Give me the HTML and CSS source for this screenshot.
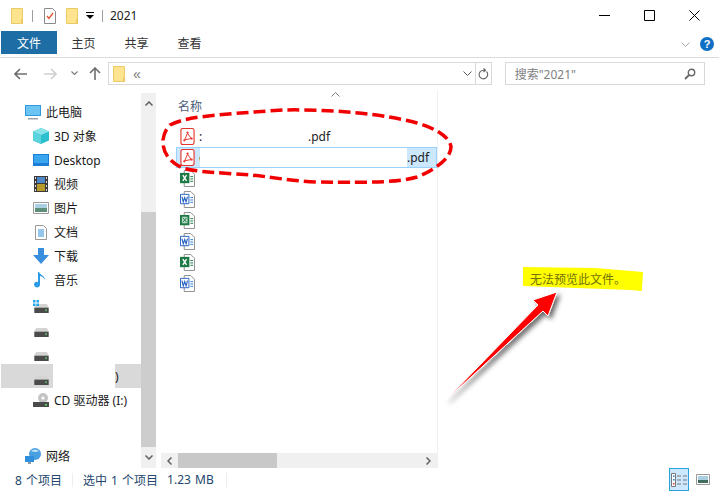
FILE: index.html
```html
<!DOCTYPE html>
<html lang="zh-CN">
<head>
    <meta charset="UTF-8">
    <title>2021</title>
    <link rel="stylesheet" href="styles.css">
</head>
<body>
    <svg class="defs" width="0" height="0">
        <symbol id="folder" viewBox="0 0 12 16">
            <path d="M.5.5h11v15H.5z" fill="#ffe48f" stroke="#eccb66"/>
            <path d="M10 11h2v5h-2z" fill="#eccb66"/>
        </symbol>
        <symbol id="pdf" viewBox="0 0 16 18">
            <path d="M1 2.500q0-2 2-2h10q2 0 2 2v13q0 2-2 2H3q-2 0-2-2z" fill="#fff" stroke="#e5352b" stroke-width="1.200"/>
            <path d="M8 5.500L5 12.500 12 11.200Z" fill="none" stroke="#e5352b"/>
            <circle cx="8" cy="4.800" r="1.200" fill="#e5352b"/>
            <circle cx="4.600" cy="13" r="1.200" fill="#e5352b"/>
            <circle cx="12.400" cy="11.200" r="1.200" fill="#e5352b"/>
        </symbol>
        <symbol id="xls" viewBox="0 0 16 18">
            <path d="M4.500.5h7l4 4v13h-11z" fill="#fff" stroke="#8a8a8a"/>
            <path d="M0 3h10v11H0z" fill="#1d7a45"/>
            <path d="M3 5.500l4 6M7 5.500l-4 6" stroke="#fff" stroke-width="1.500"/>
            <path d="M11 7h3M11 9.500h3M11 12h3" stroke="#1d7a45"/>
        </symbol>
        <symbol id="xlsm" viewBox="0 0 16 18">
            <path d="M4.500.5h7l4 4v13h-11z" fill="#fff" stroke="#8a8a8a"/>
            <path d="M1 4h8v9H1z" fill="#bcdcc8" stroke="#1d7a45" stroke-width="2"/>
            <path d="M3 6l4 5M7 6l-4 5" stroke="#1d7a45"/>
            <path d="M11 7h3M11 9.500h3M11 12h3" stroke="#1d7a45"/>
        </symbol>
        <symbol id="doc" viewBox="0 0 16 18">
            <path d="M4.500.5h7l4 4v13h-11z" fill="#fff" stroke="#8a8a8a"/>
            <path d="M.5 3.500h9v10h-9z" fill="#fff" stroke="#1f5fc0"/>
            <path d="M2 6l1.500 5.500L5 7l1.500 4.500L8 6" fill="none" stroke="#1f5fc0" stroke-width="1.200"/>
            <path d="M11 7h3M11 9.500h3M11 12h3" stroke="#2b7cd3"/>
        </symbol>
        <symbol id="drive" viewBox="0 0 16 10">
            <path d="M2 0h12l2 4H0z" fill="#d4d4d4"/>
            <path d="M0 4h16v6H0z" fill="#4b4b4b"/>
            <path d="M12 6h2v1.500h-2z" fill="#5fe05f"/>
        </symbol>
    </svg>

    <div class="window">
        <header class="titlebar">
            <svg class="ic-folder"><use href="#folder"/></svg>
            <span class="qa-sep"></span>
            <svg class="qa-doc" width="12" height="16" viewBox="0 0 12 16">
                <path d="M.5.500h8l3 3v12H.500z" fill="#fff" stroke="#8a8a8a"/>
                <path d="M3 8l2 2.500L9 5" fill="none" stroke="#e0532b" stroke-width="1.300"/>
            </svg>
            <svg class="ic-folder"><use href="#folder"/></svg>
            <svg class="qa-more" width="8" height="8" viewBox="0 0 8 8">
                <path d="M0 0h8v1H0zM0 3h8L4 7z"/>
            </svg>
            <span class="qa-sep qa-sep-last"></span>
            <span class="title">2021</span>
            <div class="winbtns">
                <svg width="11" height="11" viewBox="0 0 11 11"><path d="M0 5.500h11" stroke="#000"/></svg>
                <svg width="11" height="11" viewBox="0 0 11 11"><path d="M.5.500h10v10H.5z" fill="none" stroke="#000"/></svg>
                <svg width="11" height="11" viewBox="0 0 11 11"><path d="M.5.500l10 10M10.500.500l-10 10" stroke="#000"/></svg>
            </div>
        </header>

        <nav class="ribbon">
            <span class="tab tab-file">文件</span>
            <span class="tab">主页</span>
            <span class="tab">共享</span>
            <span class="tab">查看</span>
            <svg class="ribbon-chev" width="9" height="6" viewBox="0 0 9 6"><path d="M.5.500l4 4 4-4" fill="none" stroke="#a8a8a8"/></svg>
            <span class="help">?</span>
        </nav>

        <div class="navbar">
            <svg class="nav-back" width="13" height="12" viewBox="0 0 13 12"><path d="M6 1L1 6l5 5M1 6h12" fill="none" stroke="#6e6e6e" stroke-width="1.600"/></svg>
            <svg class="nav-fwd" width="13" height="12" viewBox="0 0 13 12"><path d="M7 1l5 5-5 5M12 6H0" fill="none" stroke="#d0d0d0" stroke-width="1.600"/></svg>
            <svg class="nav-drop" width="7" height="5" viewBox="0 0 7 5"><path d="M.5.500l3 3 3-3" fill="none" stroke="#7a7a7a" stroke-width="1.200"/></svg>
            <svg class="nav-up" width="12" height="13" viewBox="0 0 12 13"><path d="M1 6l5-5 5 5M6 1v12" fill="none" stroke="#6e6e6e" stroke-width="1.600"/></svg>
            <div class="address">
                <svg class="ic-folder"><use href="#folder"/></svg>
                <span class="crumb">«</span>
                <svg class="addr-chev" width="9" height="6" viewBox="0 0 9 6"><path d="M.5.500l4 4 4-4" fill="none" stroke="#555"/></svg>
            </div>
            <div class="refresh">
                <svg width="11" height="12" viewBox="0 0 11 12"><path d="M8.500 3.500a4.300 4.300 0 1 1-3-1.300H7M5.500.500L7.500 2.200 5.500 4" fill="none" stroke="#666" stroke-width="1.100"/></svg>
            </div>
            <div class="search">
                <span>搜索"2021"</span>
                <svg width="12" height="12" viewBox="0 0 12 12"><circle cx="7.500" cy="4.500" r="3.200" fill="none" stroke="#666" stroke-width="1.400"/><path d="M5 7l-4 4" stroke="#666" stroke-width="1.800"/></svg>
            </div>
        </div>

        <main class="content">
            <aside class="sidebar">
                <ul class="tree">
                    <li class="node top">
                        <svg width="16" height="15" viewBox="0 0 16 15"><path d="M0 0h16v11H0z" fill="#2f9ae0"/><path d="M1 1h14v9H1z" fill="#6cc4f2"/><path d="M3 13h10v1.500H3z" fill="#9aa4ad"/></svg>
                        此电脑
                    </li>
                    <li class="node">
                        <svg width="16" height="16" viewBox="0 0 16 16"><path d="M8 0l8 3.500v9L8 16l-8-3.500v-9z" fill="#2cc0cf"/><path d="M8 0l8 3.500L8 7 0 3.500z" fill="#8be3ea"/><path d="M8 7v9l-8-3.500v-9z" fill="#5ad3dd"/></svg>
                        3D 对象
                    </li>
                    <li class="node">
                        <svg width="16" height="12" viewBox="0 0 16 12"><path d="M0 0h16v12H0z" fill="#1a7fd4"/><path d="M1 1h14v8H1z" fill="#3aa6ee"/></svg>
                        Desktop
                    </li>
                    <li class="node">
                        <svg width="16" height="16" viewBox="0 0 14 16"><path d="M0 0h14v16H0z" fill="#3a3a3a"/><path d="M3 1h8v6H3z" fill="#4f86c6"/><path d="M3 8h8v7H3z" fill="#b89a2c"/><path d="M1 1h1v2H1zM1 5h1v2H1zM1 9h1v2H1zM1 13h1v2H1zM12 1h1v2h-1zM12 5h1v2h-1zM12 9h1v2h-1zM12 13h1v2h-1z" fill="#ddd"/></svg>
                        视频
                    </li>
                    <li class="node">
                        <svg width="16" height="12" viewBox="0 0 16 12"><path d="M.5.500h15v11H.5z" fill="#fff" stroke="#9a9a9a"/><path d="M2 2h12v4H2z" fill="#a9cfe0"/><path d="M2 6h12v4H2z" fill="#5f8f7a"/></svg>
                        图片
                    </li>
                    <li class="node">
                        <svg width="16" height="15" viewBox="0 0 12 15"><path d="M.5.500h8l3 3v11H.5z" fill="#fff" stroke="#9a9a9a"/><path d="M3 5h6M3 7h6M3 9h6M3 11h6" stroke="#2b8fd8"/></svg>
                        文档
                    </li>
                    <li class="node">
                        <svg width="16" height="16" viewBox="0 0 16 16"><path d="M5 0h6v7h5l-8 9-8-9h5z" fill="#3a8ede"/></svg>
                        下载
                    </li>
                    <li class="node">
                        <svg width="16" height="16" viewBox="0 0 12 16"><path d="M5 1v11.500a3 2.800 0 1 1-2-2.500V0h1c1 3 6 3.500 6 8-1-2.500-3-3.500-5-4z" fill="#2b9be8"/></svg>
                        音乐
                    </li>
                    <li class="node drive">
                        <svg class="drive-win" width="6" height="6" viewBox="0 0 6 6"><path d="M0 0h2.500v2.500H0zM3.500 0H6v2.500H3.500zM0 3.500h2.500V6H0zM3.500 3.500H6V6H3.500z" fill="#1ea7ee"/></svg>
                        <svg class="ic-drive"><use href="#drive"/></svg>
                    </li>
                    <li class="node drive"><svg class="ic-drive"><use href="#drive"/></svg></li>
                    <li class="node drive"><svg class="ic-drive"><use href="#drive"/></svg></li>
                    <li class="node drive selected">
                        <svg class="ic-drive"><use href="#drive"/></svg>
                        <span class="blank-name"></span>)
                    </li>
                    <li class="node">
                        <svg width="16" height="14" viewBox="0 0 16 14"><circle cx="10" cy="5" r="5" fill="#c4c4c4"/><circle cx="10" cy="5" r="1.600" fill="#fff"/><path d="M0 9h16v5H0z" fill="#4b4b4b"/><path d="M12 11h2v1.500h-2z" fill="#5fe05f"/></svg>
                        CD 驱动器 (I:)
                    </li>
                    <li class="node top network">
                        <svg width="16" height="16" viewBox="0 0 16 16"><circle cx="10" cy="6" r="6" fill="#4a9fe0"/><path d="M6 3q4-3 8 0-4 2-8 0z" fill="#bfe3f7"/><path d="M0 8h9v6H0z" fill="#2f8fdc"/><path d="M3 14h3v2H3z" fill="#8a9aa6"/></svg>
                        网络
                    </li>
                </ul>
                <div class="vscroll">
                    <span class="sb-btn"><svg width="8" height="5" viewBox="0 0 8 5"><path d="M.5 4.500L4 1l3.500 3.500" fill="none" stroke="#606060" stroke-width="1.500"/></svg></span>
                    <span class="vscroll-track"></span>
                    <span class="vscroll-thumb"></span>
                    <span class="sb-btn"><svg width="8" height="5" viewBox="0 0 8 5"><path d="M.5.500L4 4l3.500-3.500" fill="none" stroke="#606060" stroke-width="1.500"/></svg></span>
                </div>
            </aside>

            <section class="files">
                <div class="sort-caret"><svg width="9" height="5" viewBox="0 0 9 5"><path d="M.5 4.500l4-4 4 4" fill="none" stroke="#808080"/></svg></div>
                <div class="col-name">名称</div>
                <ul class="file-list">
                    <li class="file">
                        <svg width="15" height="17"><use href="#pdf"/></svg>
                        <span class="lead">:</span><span class="gap-first"></span>.pdf
                    </li>
                    <li class="file current">
                        <svg width="15" height="17"><use href="#pdf"/></svg>
                        <span class="lead">c</span><span class="gap-edit"></span>.pdf
                    </li>
                    <li class="file"><svg width="15" height="17"><use href="#xls"/></svg></li>
                    <li class="file"><svg width="15" height="17"><use href="#doc"/></svg></li>
                    <li class="file"><svg width="15" height="17"><use href="#xlsm"/></svg></li>
                    <li class="file"><svg width="15" height="17"><use href="#doc"/></svg></li>
                    <li class="file"><svg width="15" height="17"><use href="#xls"/></svg></li>
                    <li class="file"><svg width="15" height="17"><use href="#doc"/></svg></li>
                </ul>
                <div class="hscroll">
                    <span class="sb-btn-h"><svg width="5" height="8" viewBox="0 0 5 8"><path d="M4.500.5L1 4l3.500 3.500" fill="none" stroke="#606060" stroke-width="1.500"/></svg></span>
                    <span class="hscroll-thumb"></span>
                    <span class="hscroll-track"></span>
                    <span class="sb-btn-h"><svg width="5" height="8" viewBox="0 0 5 8"><path d="M.5.500L4 4 .5 7.500" fill="none" stroke="#606060" stroke-width="1.500"/></svg></span>
                </div>
            </section>

            <section class="preview">
                <span class="preview-msg">无法预览此文件。</span>
            </section>
        </main>

        <footer class="status">
            <span class="st-count">8 个项目</span>
            <span class="st-sep"></span>
            <span class="st-sel">选中 1 个项目</span>
            <span class="st-size">1.23 MB</span>
            <span class="st-sep st-sep-2"></span>
            <span class="view-btn view-on">
                <svg width="16" height="14" viewBox="0 0 16 14"><path d="M.5.500h4v13h-4z" fill="#fff" stroke="#777"/><path d="M2 2.500h1.500V4H2zM2 6h1.500v1.500H2z" fill="#3a7fc4"/><path d="M2 10h1.500v1.500H2z" fill="#e0352b"/><path d="M6 3h4M12 3h4M6 7h4M12 7h4M6 11h4M12 11h4" stroke="#777"/></svg>
            </span>
            <span class="view-btn">
                <svg width="14" height="11" viewBox="0 0 14 11"><path d="M.5.500h13v10H.5z" fill="#fff" stroke="#999"/><path d="M2 2h10v4H2z" fill="#a9cfe0"/><path d="M2 6h10v3H2z" fill="#3f6f5c"/></svg>
            </span>
        </footer>

        <!-- annotations drawn over the screenshot -->
        <svg class="marks" width="719" height="493" viewBox="0 0 719 493">
            <defs>
                <filter id="arrow-shadow" x="-20%" y="-20%" width="150%" height="150%">
                    <feDropShadow dx="3" dy="3" stdDeviation="2.500" flood-color="#000" flood-opacity=".6"/>
                </filter>
            </defs>
            <path d="M170 125C185 117 210 115 283 110C330 109 385 114 417 123C435 128 450 137 451 147C451 158 435 170 417 177C400 182 375 183 317 182C290 181 265 176 250 175C225 173 195 172 183 168C170 163 162 152 163 140C164 133 166 129 170 125Z" fill="none" stroke="#f00000" stroke-width="3.500" stroke-dasharray="12 5"/>
            <path class="arrow" d="M446 400L538 305 533 300 557 292 548 316 543 311Z" fill="#f00" stroke="#fff" stroke-width="1" filter="url(#arrow-shadow)"/>
        </svg>
    </div>
</body>
</html>
```
FILE: styles.css
```css
* {
    box-sizing: border-box;
}
html, body {
    margin: 0;
    padding: 0;
}
body {
    font-family: "Noto Sans", "Noto Sans CJK SC", sans-serif;
    font-size: 12px;
    color: #1a1a1a;
    background: #fff;
}
ul {
    list-style: none;
    margin: 0;
    padding: 0;
}
svg {
    display: block;
    flex: none;
}
.defs {
    position: absolute;
}
.window {
    position: relative;
    width: 719px;
    height: 493px;
    overflow: hidden;
    display: flex;
    flex-direction: column;
}
.ic-folder {
    width: 12px;
    height: 16px;
}

/* title bar */
.titlebar {
    height: 31px;
    display: flex;
    align-items: center;
    padding-left: 11px;
}
.qa-sep {
    width: 1px;
    height: 12px;
    background: #a0a0a0;
    margin: 0 11px 0 9px;
}
.qa-doc {
    margin-right: 10px;
}
.qa-more {
    margin-left: 8px;
}
.qa-sep-last {
    margin: 0 7px 0 8px;
}
.title {
    font-size: 12px;
    color: #222;
}
.winbtns {
    margin-left: auto;
    display: flex;
    gap: 34px;
    padding-right: 19px;
}

/* ribbon tabs */
.ribbon {
    height: 27px;
    display: flex;
    align-items: flex-start;
    padding-left: 1px;
    border-bottom: 1px solid #dadbdc;
}
.tab {
    width: 53px;
    height: 23px;
    line-height: 25px;
    text-align: center;
    color: #333;
}
.tab-file {
    width: 56px;
    background: #1e6ea5;
    color: #fff;
}
.ribbon-chev {
    margin: 11px 0 0 auto;
}
.help {
    width: 14px;
    height: 14px;
    margin: 6px 5px 0 10px;
    border-radius: 50%;
    background: #0f6fc6;
    color: #fff;
    font: bold 11px/14px "Liberation Sans", sans-serif;
    text-align: center;
}

/* address row */
.navbar {
    height: 32px;
    display: flex;
    align-items: center;
    padding: 4px 14px 5px 14px;
}
.nav-fwd {
    margin-left: 17px;
}
.nav-drop {
    margin-left: 14px;
}
.nav-up {
    margin-left: 11px;
}
.address {
    margin-left: 7px;
    width: 369px;
    height: 23px;
    border: 1px solid #d9d9d9;
    display: flex;
    align-items: center;
    padding-left: 4px;
}
.crumb {
    margin-left: 8px;
    font: 14px "Liberation Sans", sans-serif;
    color: #777;
}
.addr-chev {
    margin-left: auto;
    margin-right: 3px;
}
.refresh {
    width: 16px;
    height: 23px;
    border: 1px solid #d9d9d9;
    border-left: none;
    display: flex;
    align-items: center;
    justify-content: center;
}
.search {
    margin-left: 13px;
    width: 201px;
    height: 23px;
    border: 1px solid #d9d9d9;
    display: flex;
    align-items: center;
    justify-content: space-between;
    padding: 0 8px 0 9px;
    color: #808080;
}

/* main area */
.content {
    height: 378px;
    display: flex;
}
.sidebar {
    width: 158px;
    display: flex;
    flex: none;
    padding-top: 3px;
}
.tree {
    width: 141px;
    padding: 7px 0 0 1px;
}
.node {
    height: 24px;
    display: flex;
    align-items: center;
    gap: 5px;
    padding-left: 32px;
    color: #1a1a1a;
}
.node.top {
    padding-left: 24px;
}
.network {
    margin-top: 32px;
}
.drive {
    position: relative;
}
.ic-drive {
    width: 15px;
    height: 9px;
    margin: 8px 0 0 1px;
}
.drive-win {
    position: absolute;
    left: 32px;
    top: 8px;
}
.selected {
    background: #d9d9d9;
}
.blank-name {
    width: 62px;
    height: 24px;
    background: #fff;
    margin: 0 -5px 0 -1px;
}
.vscroll {
    width: 15px;
    display: flex;
    flex-direction: column;
    background: #f0f0f0;
}
.sb-btn {
    height: 21px;
    display: flex;
    align-items: center;
    justify-content: center;
}
.vscroll-track {
    height: 98px;
}
.vscroll-thumb {
    flex: 1;
    background: #cdcdcd;
}
.files {
    width: 280px;
    flex: none;
    display: flex;
    flex-direction: column;
    position: relative;
    border-right: 1px solid #f0f0f0;
}
.sort-caret {
    height: 7px;
    padding: 2px 0 0 173px;
}
.col-name {
    height: 29px;
    padding: 0 0 0 20px;
    line-height: 19px;
    color: #4c607a;
}
.file-list {
    flex: 1;
    padding-left: 18px;
}
.file {
    height: 21px;
    display: flex;
    align-items: center;
    padding-left: 4px;
    color: #1a1a1a;
    font-size: 12px;
}
.file svg {
    margin-right: 4px;
}
.lead {
    width: 4px;
}
.gap-first {
    width: 105px;
}
/* white box hides the rest of the name */
.gap-edit {
    position: relative;
    width: 207px;
    height: 19px;
    margin-left: -3px;
    background: #fff;
}
.current {
    background: #cce8ff;
    border: 1px solid #99d1ff;
    padding-left: 3px;
}
.hscroll {
    height: 15px;
    margin-left: 3px;
    display: flex;
    background: #f0f0f0;
}
.sb-btn-h {
    width: 17px;
    display: flex;
    align-items: center;
    justify-content: center;
}
.hscroll-thumb {
    width: 99px;
    background: #c8c8c8;
}
.hscroll-track {
    flex: 1;
}
.preview {
    flex: 1;
    display: flex;
    align-items: center;
    padding-left: 85px;
}
.preview-msg {
    width: 120px;
    height: 24px;
    line-height: 24px;
    padding: 1px 0 0 7px;
    background: #ffff00;
    color: #72720a;
    white-space: nowrap;
    clip-path: polygon(0 0, 60% 4%, 100% 21%, 99% 100%, 90% 96%, 0 79%);
}

/* status bar */
.status {
    flex: 1;
    display: flex;
    align-items: center;
    color: #23476e;
    padding: 0 9px 2px 15px;
    word-spacing: 1px;
}
.st-sep {
    width: 1px;
    height: 14px;
    background: #ededed;
    margin: 0 10px 0 10px;
}
.st-size {
    margin-left: 9px;
}
.st-sep-2 {
    margin: 0 0 0 12px;
}
.view-btn {
    width: 14px;
    display: flex;
    align-items: center;
    justify-content: center;
    margin-left: 7px;
}
.view-on {
    width: 20px;
    height: 23px;
    margin-left: auto;
    background: #cce8ff;
    border: 1px solid #29a3dc;
}

/* red marks */
.marks {
    position: absolute;
    left: 0;
    top: 0;
    pointer-events: none;
}
```
